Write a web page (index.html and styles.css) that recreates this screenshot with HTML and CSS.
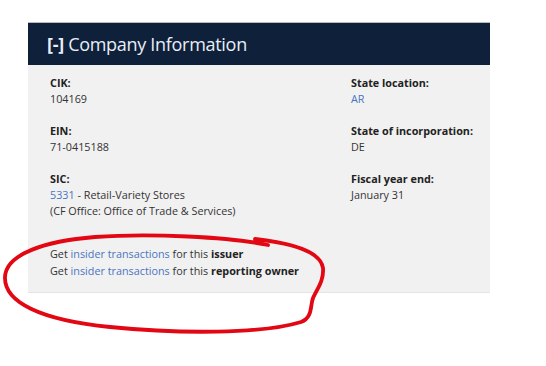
FILE: index.html
```html
<!DOCTYPE html>
<html lang="en">
<head>
  <meta charset="UTF-8">
  <title>Company Information</title>
  <link rel="stylesheet" href="styles.css">
</head>
<body>
  <div class="panel">
    <div class="panel-header"><b>[-]</b> Company Information</div>
    <div class="panel-body">
      <div class="info-grid">
        <div class="col">
          <div class="item">
            <div class="label">CIK:</div>
            <div class="value">104169</div>
          </div>
          <div class="item">
            <div class="label">EIN:</div>
            <div class="value">71-0415188</div>
          </div>
          <div class="item">
            <div class="label">SIC:</div>
            <div class="value"><a href="#">5331</a> - Retail-Variety Stores</div>
            <div class="value">(CF Office: Office of Trade &amp; Services)</div>
          </div>
        </div>
        <div class="col">
          <div class="item">
            <div class="label">State location:</div>
            <div class="value"><a href="#">AR</a></div>
          </div>
          <div class="item">
            <div class="label">State of incorporation:</div>
            <div class="value">DE</div>
          </div>
          <div class="item">
            <div class="label">Fiscal year end:</div>
            <div class="value">January 31</div>
          </div>
        </div>
      </div>
      <div class="insider">
        <div>Get <a href="#">insider transactions</a> for this <b>issuer</b></div>
        <div>Get <a href="#">insider transactions</a> for this <b>reporting owner</b></div>
      </div>
    </div>
  </div>
  <!-- hand-drawn annotation on top of the screenshot -->
  <svg class="scribble" width="546" height="366" viewBox="0 0 546 366">
    <path d="M268 245 C230 237 150 233 95 237 C45 241 6 254 5 277 C4 302 40 320 110 327 C180 334 262 334 301 322 C313 317 310 306 313 298 C317 289 324 281 323 268 C321 254 300 244 255 239"
          fill="none" stroke="#e30613" stroke-width="3.8" stroke-linecap="round"/>
  </svg>
</body>
</html>
```

FILE: styles.css
```css
html, body {
  margin: 0;
  padding: 0;
  background: #fff;
  font-family: "Open Sans", "Noto Sans", sans-serif;
  color: #333;
}
.panel {
  width: 462px;
  margin: 22px 0 0 28px;
  background: #f1f1f1;
  border-bottom: 1px solid #e4e4e4;
}
.panel-header {
  background: #0e203a;
  color: #e8eef6;
  height: 43px;
  line-height: 43px;
  padding-left: 19px;
  font-size: 18px;
  letter-spacing: -0.3px;
  border-top: 1px solid #b8bcc2;
  box-sizing: border-box;
}
.panel-body {
  padding: 10px 0 13px 22px;
  font-size: 10.8px;
}
.info-grid {
  display: grid;
  grid-template-columns: 301px 1fr;
}
.item { margin-bottom: 16px; }
.label {
  font-weight: bold;
  color: #222;
  line-height: 16px;
}
.value { line-height: 16px; }
a { color: #4a74c0; text-decoration: none; }
.insider {
  margin-top: 10px;
  line-height: 17px;
}
.insider b { color: #222; }
.scribble {
  position: absolute;
  left: 0;
  top: 0;
  pointer-events: none;
}
```
